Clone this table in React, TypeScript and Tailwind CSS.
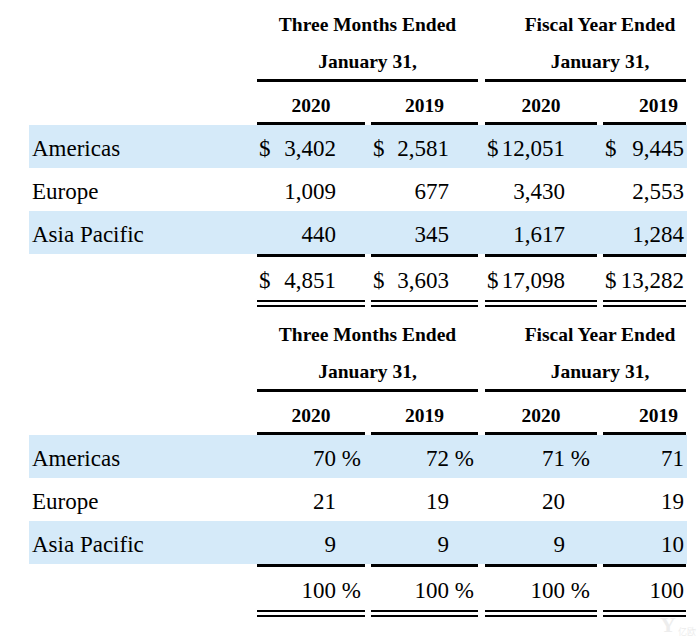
import React from 'react'

type Cell = { cur?: boolean; v: string; pct?: boolean }
type Row = { label: string; band: boolean; cells: Cell[] }

const colW = ['w-[108px]', 'ml-[6px] w-[107px]', 'ml-[7px] w-[112px]', 'ml-[6px] w-[83px]']
const sufW = ['w-[29px]', 'w-[29px]', 'w-[32px]', 'w-[2px]']

const serif = { fontFamily: '"Liberation Serif", "Times New Roman", serif' }

function Rule({ h = 'h-[3px]' }: { h?: string }) {
  return (
    <div className="flex pl-[257px]">
      {colW.map((w, i) => (
        <div key={i} className={`${w} ${h} bg-black`} />
      ))}
    </div>
  )
}

function DataRow({ row }: { row: Row }) {
  return (
    <div
      className={`ml-[29px] flex h-[43px] w-[658px] items-center pt-[4px] text-[23px] leading-none ${
        row.band ? 'bg-[#d5eaf9]' : ''
      }`}
    >
      <div className="w-[228px] pl-[3px]">{row.label}</div>
      {row.cells.map((c, i) => (
        <div key={i} className={`${colW[i]} flex justify-between pl-[2px]`}>
          <span>{c.cur ? '$' : ''}</span>
          <span className="flex">
            <span>{c.v}</span>
            <span className={`${sufW[i]} whitespace-pre text-left`}>{c.pct ? ' %' : ''}</span>
          </span>
        </div>
      ))}
    </div>
  )
}

function Table({ rows, total }: { rows: Row[]; total: Cell[] }) {
  return (
    <div className="h-[310px] text-black" style={serif}>
      {/* group headings */}
      <div className="flex h-[50px] items-center pl-[257px] text-[19.5px] font-bold leading-none">
        <div className="w-[221px] text-center">Three Months Ended</div>
        <div className="ml-[7px] w-[201px] pl-[29px] text-center">Fiscal Year Ended</div>
      </div>
      <div className="flex h-[29px] pl-[257px] text-[19.5px] font-bold leading-[24px]">
        <div className="w-[221px] text-center">January 31,</div>
        <div className="ml-[7px] w-[201px] pl-[29px] text-center">January 31,</div>
      </div>
      <div className="flex pl-[257px]">
        <div className="h-[3px] w-[221px] bg-black" />
        <div className="ml-[7px] h-[3px] w-[201px] bg-black" />
      </div>
      {/* years */}
      <div className="flex h-[40px] pl-[257px] pt-[12px] text-[19.5px] font-bold leading-[24px]">
        <div className="w-[108px] text-center">2020</div>
        <div className="ml-[6px] w-[107px] text-center">2019</div>
        <div className="ml-[7px] w-[112px] text-center">2020</div>
        <div className="ml-[6px] w-[83px] pr-[8px] text-right">2019</div>
      </div>
      <Rule />
      {rows.map((r) => (
        <DataRow key={r.label} row={r} />
      ))}
      <Rule />
      <DataRow row={{ label: '', band: false, cells: total }} />
      <Rule h="h-[2px]" />
      <div className="h-[3px]" />
      <Rule h="h-[2px]" />
    </div>
  )
}

const revenue: Row[] = [
  {
    label: 'Americas',
    band: true,
    cells: [
      { cur: true, v: '3,402' },
      { cur: true, v: '2,581' },
      { cur: true, v: '12,051' },
      { cur: true, v: '9,445' },
    ],
  },
  { label: 'Europe', band: false, cells: [{ v: '1,009' }, { v: '677' }, { v: '3,430' }, { v: '2,553' }] },
  { label: 'Asia Pacific', band: true, cells: [{ v: '440' }, { v: '345' }, { v: '1,617' }, { v: '1,284' }] },
]

const revenueTotal: Cell[] = [
  { cur: true, v: '4,851' },
  { cur: true, v: '3,603' },
  { cur: true, v: '17,098' },
  { cur: true, v: '13,282' },
]

const share: Row[] = [
  {
    label: 'Americas',
    band: true,
    cells: [{ v: '70', pct: true }, { v: '72', pct: true }, { v: '71', pct: true }, { v: '71' }],
  },
  { label: 'Europe', band: false, cells: [{ v: '21' }, { v: '19' }, { v: '20' }, { v: '19' }] },
  { label: 'Asia Pacific', band: true, cells: [{ v: '9' }, { v: '9' }, { v: '9' }, { v: '10' }] },
]

const shareTotal: Cell[] = [
  { v: '100', pct: true },
  { v: '100', pct: true },
  { v: '100', pct: true },
  { v: '100' },
]

export default function App() {
  return (
    <div className="relative h-[641px] w-[700px] overflow-hidden bg-white">
      <Table rows={revenue} total={revenueTotal} />
      <Table rows={share} total={shareTotal} />
      {/* faint watermark */}
      <div className="absolute left-[660px] top-[614px] flex items-end gap-[2px] text-[#ededed]">
        <span className="text-[22px] font-bold leading-none" style={serif}>
          Y
        </span>
        <span className="text-[9px] leading-none" style={{ fontFamily: '"Noto Sans CJK SC", sans-serif' }}>
          亿欧
        </span>
      </div>
    </div>
  )
}
